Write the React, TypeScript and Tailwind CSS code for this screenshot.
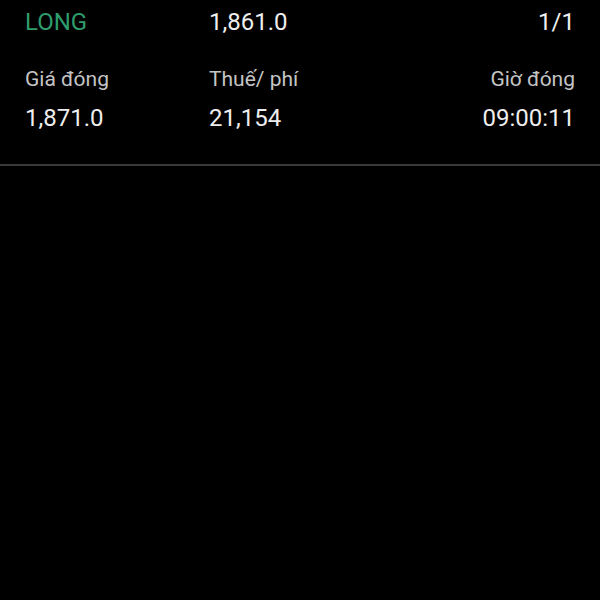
export default function App() {
  return (
    <div className="w-[600px] h-[600px] bg-black text-[#eeeeee]" style={{ fontFamily: 'Roboto, "Noto Sans", sans-serif' }}>
      <div className="px-[25px] pt-[7px] pb-[31px] border-b-2 border-[#3a3a3a]">
        <div className="grid grid-cols-[184px_1fr_1fr] text-[24px] leading-[30px]">
          <span className="text-[#2f9c6c]">LONG</span>
          <span>1,861.0</span>
          <span className="text-right">1/1</span>
        </div>
        <div className="grid grid-cols-[184px_1fr_1fr] mt-[29px] text-[21px] leading-[26px] text-[#c4c4c4]">
          <span>Giá đóng</span>
          <span>Thuế/ phí</span>
          <span className="text-right">Giờ đóng</span>
        </div>
        <div className="grid grid-cols-[184px_1fr_1fr] mt-[11px] text-[24px] leading-[30px]">
          <span>1,871.0</span>
          <span>21,154</span>
          <span className="text-right">09:00:11</span>
        </div>
      </div>
    </div>
  )
}
